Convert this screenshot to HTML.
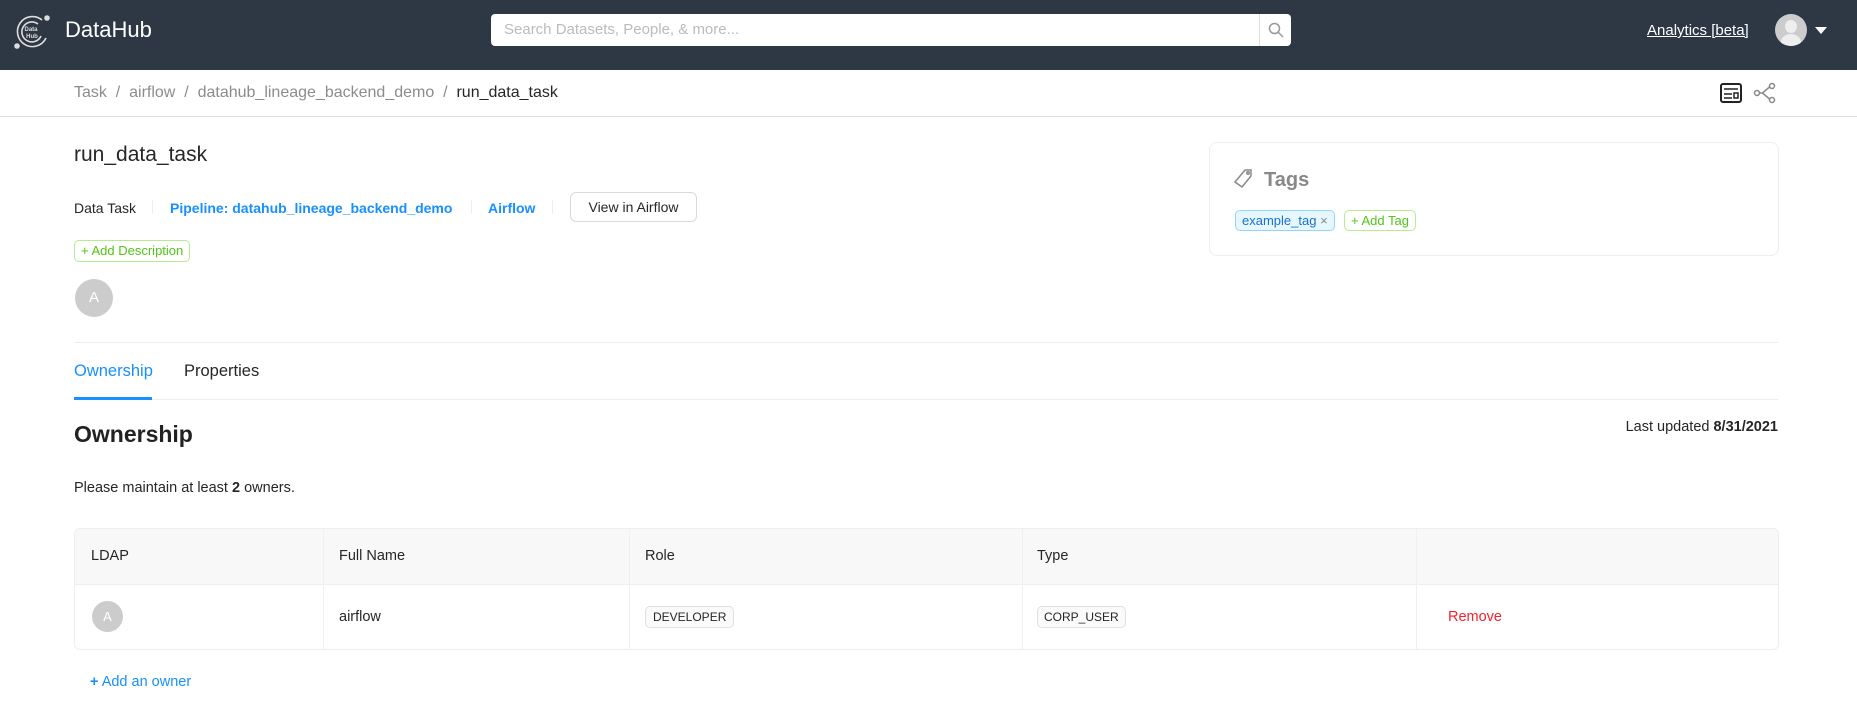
<!DOCTYPE html>
<html><head><meta charset="utf-8"><style>
*{box-sizing:border-box;margin:0;padding:0}
body{width:1857px;height:728px;overflow:hidden;background:#fff;font-family:"Liberation Sans",Arial,sans-serif;color:#262626;position:relative}
.a{position:absolute;white-space:nowrap}
.hdr{position:absolute;left:0;top:0;width:1857px;height:70px;background:#2e3744}
.tag{position:absolute;border-radius:5px;font-size:13px;line-height:20px;padding:0 8px}
</style></head><body>
<div class="hdr"></div>
<svg class="a" style="left:12px;top:12px" width="40" height="40" viewBox="0 0 40 40" fill="none" stroke="#ddd" stroke-width="1.6">
<path d="M30 8 A15 15 0 1 0 34 26"/><path d="M26 12 A10 10 0 1 0 29 24"/><circle cx="35" cy="6" r="2" fill="#ddd"/><circle cx="5" cy="34" r="2" fill="#ddd"/>
<text x="19" y="19" font-size="6" fill="#ddd" stroke="none" text-anchor="middle" font-weight="bold">Data</text>
<text x="20" y="26" font-size="6" fill="#ddd" stroke="none" text-anchor="middle" font-weight="bold">Hub</text></svg>
<div class="a" style="left:65px;top:17px;font-size:22px;color:#fff">DataHub</div>
<div class="a" style="left:491px;top:14px;width:800px;height:32px;background:#fff;border-radius:4px"></div>
<div class="a" style="left:504px;top:21px;font-size:15px;color:#bbb">Search Datasets, People, &amp; more...</div>
<div class="a" style="left:1259px;top:14px;width:1px;height:32px;background:#ddd"></div>
<svg class="a" style="left:1267px;top:21px" width="18" height="18" viewBox="0 0 18 18" fill="none" stroke="#999" stroke-width="1.5"><circle cx="7.5" cy="7.5" r="5"/><path d="M11 11l5 5"/></svg>
<div class="a" style="left:1647px;top:22px;font-size:15px;color:#fff;text-decoration:underline">Analytics [beta]</div>
<div class="a" style="left:1775px;top:14px;width:32px;height:32px;border-radius:50%;background:#ccc;overflow:hidden"><div style="position:absolute;left:10px;top:6px;width:12px;height:13px;border-radius:50%;background:#eee"></div><div style="position:absolute;left:6px;top:20px;width:20px;height:16px;border-radius:50%;background:#eee"></div></div>
<div class="a" style="left:1815px;top:27px;border-left:6px solid transparent;border-right:6px solid transparent;border-top:7px solid #fff"></div>
<div class="a" style="left:74px;top:84px;font-size:16px;color:#8c8c8c">Task &nbsp;/&nbsp; airflow &nbsp;/&nbsp; datahub_lineage_backend_demo &nbsp;/&nbsp; <span style="color:#262626">run_data_task</span></div>
<svg class="a" style="left:1719px;top:82px" width="24" height="22" viewBox="0 0 24 22" fill="none" stroke="#222" stroke-width="2"><rect x="2" y="2" width="20" height="18" rx="2"/><path d="M5 7h14M5 12h8M5 16h8" stroke-width="1.6"/><rect x="15" y="11" width="4" height="5" stroke-width="1.5"/></svg>
<svg class="a" style="left:1753px;top:82px" width="24" height="22" viewBox="0 0 24 22" fill="none" stroke="#888" stroke-width="1.5"><circle cx="4" cy="11" r="2.5"/><circle cx="19" cy="4" r="2.5"/><circle cx="19" cy="18" r="2.5"/><path d="M6.5 11h3l7-6M9.5 11l7 6"/></svg>
<div class="a" style="left:0;top:116px;width:1857px;height:1px;background:#ddd"></div>
<div class="a" style="left:74px;top:143px;font-size:21px">run_data_task</div>
<div class="a" style="left:74px;top:199px;font-size:14px;line-height:18px">Data Task</div>
<div class="a" style="left:152px;top:200px;width:1px;height:14px;background:#eee"></div>
<div class="a" style="left:170px;top:199px;font-size:14px;line-height:18px;color:#1890ff;font-weight:bold">Pipeline: datahub_lineage_backend_demo</div>
<div class="a" style="left:471px;top:200px;width:1px;height:14px;background:#eee"></div>
<div class="a" style="left:488px;top:199px;font-size:14px;line-height:18px;color:#1890ff;font-weight:bold">Airflow</div>
<div class="a" style="left:552px;top:200px;width:1px;height:14px;background:#eee"></div>
<div class="a" style="left:570px;top:192px;width:127px;height:30px;border:1px solid #d9d9d9;border-radius:6px;font-size:14px;line-height:28px;text-align:center">View in Airflow</div>
<div class="tag a" style="left:74px;top:240px;height:22px;border:1px solid #b7eb8f;color:#52c41a;line-height:20px;padding:0 6px;font-size:13px">+ Add Description</div>
<div class="a" style="left:75px;top:279px;width:38px;height:38px;border-radius:50%;background:#ccc;color:#fff;font-size:15px;text-align:center;line-height:38px">A</div>
<div class="a" style="left:74px;top:342px;width:1704px;height:1px;background:#eee"></div>
<div class="a" style="left:1209px;top:142px;width:570px;height:114px;border:1px solid #eee;border-radius:8px"></div>
<svg class="a" style="left:1234px;top:168px" width="20" height="22" viewBox="0 0 20 22" fill="none" stroke="#888" stroke-width="1.5"><path d="M11 2h6v6l-9 11-7-5z"/><circle cx="14" cy="5" r="1.2"/></svg>
<div class="a" style="left:1264px;top:169px;font-size:20px;color:#888;font-weight:bold">Tags</div>
<div class="tag a" style="left:1235px;top:210px;height:21px;background:#e6f7ff;border:1px solid #91d5ff;color:#1870d0;padding:0 6px">example_tag <span style="color:#888">×</span></div>
<div class="tag a" style="left:1344px;top:210px;height:21px;border:1px solid #b7eb8f;color:#52c41a;padding:0 6px">+ Add Tag</div>
<div class="a" style="left:74px;top:362px;font-size:16.5px;color:#1890ff">Ownership</div>
<div class="a" style="left:184px;top:362px;font-size:16.5px">Properties</div>
<div class="a" style="left:74px;top:399px;width:1704px;height:1px;background:#eee"></div>
<div class="a" style="left:74px;top:397px;width:78px;height:3px;background:#1890ff"></div>
<div class="a" style="left:74px;top:421px;font-size:23px;font-weight:bold;color:#222">Ownership</div>
<div class="a" style="right:79px;top:419px;font-size:14.5px">Last updated <b>8/31/2021</b></div>
<div class="a" style="left:74px;top:480px;font-size:14.5px">Please maintain at least <b>2</b> owners.</div>
<div class="a" style="left:74px;top:528px;width:1705px;height:122px;border:1px solid #eee;border-radius:6px;overflow:hidden">
<div style="position:absolute;left:0;top:0;width:100%;height:56px;background:#f8f8f8;border-bottom:1px solid #eee"></div>
<div style="position:absolute;left:248px;top:0;width:1px;height:122px;background:#f0f0f0"></div>
<div style="position:absolute;left:554px;top:0;width:1px;height:122px;background:#f0f0f0"></div>
<div style="position:absolute;left:947px;top:0;width:1px;height:122px;background:#f0f0f0"></div>
<div style="position:absolute;left:1341px;top:0;width:1px;height:122px;background:#f0f0f0"></div>
</div>
<div class="a" style="left:91px;top:548px;font-size:14.5px">LDAP</div>
<div class="a" style="left:339px;top:548px;font-size:14.5px">Full Name</div>
<div class="a" style="left:645px;top:548px;font-size:14.5px">Role</div>
<div class="a" style="left:1037px;top:548px;font-size:14.5px">Type</div>
<div class="a" style="left:92px;top:601px;width:31px;height:31px;border-radius:50%;background:#ccc;color:#fff;font-size:13px;text-align:center;line-height:31px">A</div>
<div class="a" style="left:339px;top:609px;font-size:14.5px">airflow</div>
<div class="tag a" style="left:645px;top:606px;height:22px;background:#fafafa;border:1px solid #e0e0e0;font-size:12px;padding:0 7px">DEVELOPER</div>
<div class="tag a" style="left:1037px;top:606px;height:22px;background:#fafafa;border:1px solid #e0e0e0;font-size:12px;padding:0 6px">CORP_USER</div>
<div class="a" style="left:1448px;top:609px;font-size:14.5px;color:#f5222d">Remove</div>
<div class="a" style="left:90px;top:674px;font-size:14.5px;color:#1890ff"><b>+</b> Add an owner</div>
</body></html>
